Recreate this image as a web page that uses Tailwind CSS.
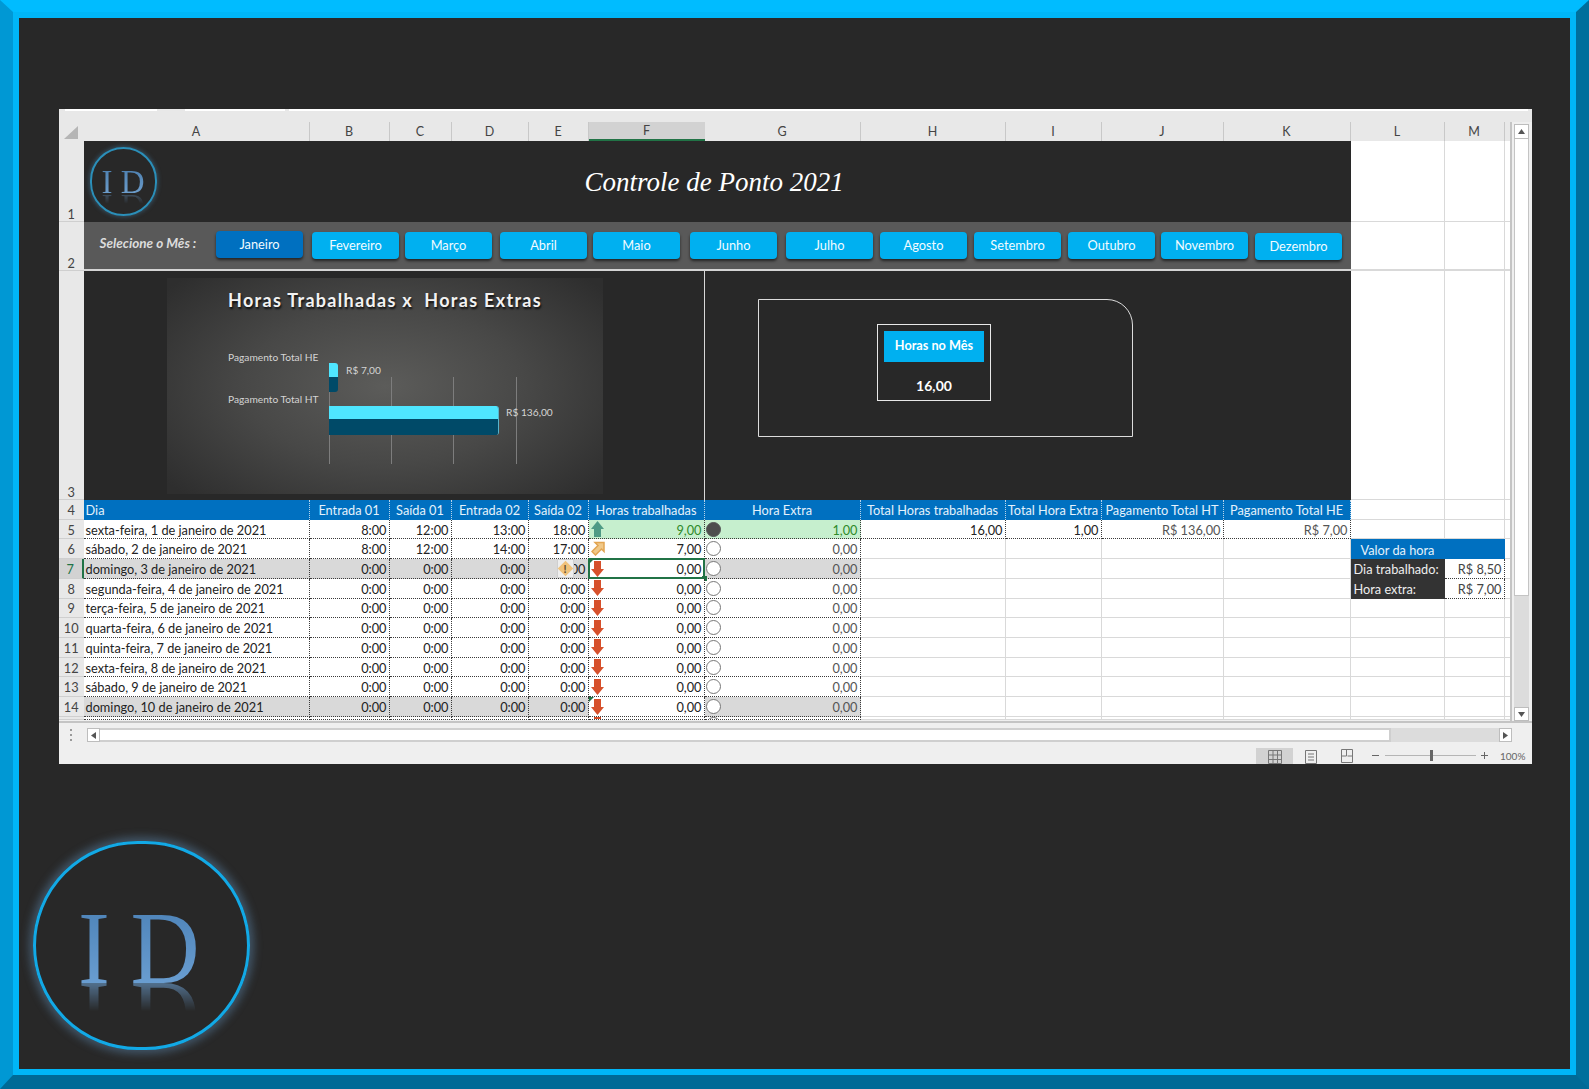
<!DOCTYPE html>
<html lang="pt-BR">
  <head>
    <meta charset="UTF-8" />
    <title>Controle de Ponto 2021</title>
    <script src="https://cdn.jsdelivr.net/npm/@tailwindcss/browser@4"></script>
  </head>
  <body class="bg-[#282828] font-[family-name:Lato,sans-serif]">
    <!-- moldura: as bordas de cores diferentes ja fazem o chanfro nos cantos -->
    <div class="w-[1589px] h-[1089px] overflow-hidden border-t-[12px] border-l-[13px] border-r-[13px] border-b-[14px] border-t-[#00bcff] border-l-[#0098d4] border-r-[#006f9c] border-b-[#006a96]">
      <div class="h-full border-x-[6px] border-t-[6px] border-b-[6px] border-[#00b6f7] bg-[#282828] pt-[91px]">

        <!-- planilha -->
        <div class="w-[1473px] h-[655px] ml-[40px] flex flex-col bg-[#efefef] overflow-hidden">
          <div class="h-[13px] shrink-0 bg-[#e8e8e8] flex gap-[4px] pl-[6px]">
            <div class="w-[92px] h-[2px] bg-white"></div>
            <div class="w-[100px] h-[2px] bg-white ml-[24px]"></div>
            <div class="flex-1 h-[2px] bg-white mr-[4px]"></div>
          </div>

          <div class="flex h-[599px] shrink-0">
            <div id="grid" class="w-[1453px] h-[599px] grid grid-cols-[24.500px_226px_80px_62px_77px_60px_116px_156px_145px_96px_122px_127px_94px_60px_7.500px] grid-rows-[19px_81px_49px_229px_repeat(11,19.72px)_3px] border-r-2 border-[#c4c4c4] text-[12.75px] text-[#222] overflow-hidden">
              <!-- linha das letras -->
              <div class="bg-[#e8e8e8] flex items-center justify-center">
                <svg width="16" height="15" viewBox="0 0 16 15"><path d="M15 2V15H1Z" fill="#b5b5b5" /></svg>
              </div>
              <div class="bg-[#e8e8e8] border-r border-[#c8c8c8] text-center text-[#444] text-[12.5px] leading-[19px]">A</div>
              <div class="bg-[#e8e8e8] border-r border-[#c8c8c8] text-center text-[#444] text-[12.5px] leading-[19px]">B</div>
              <div class="bg-[#e8e8e8] border-r border-[#c8c8c8] text-center text-[#444] text-[12.5px] leading-[19px]">C</div>
              <div class="bg-[#e8e8e8] border-r border-[#c8c8c8] text-center text-[#444] text-[12.5px] leading-[19px]">D</div>
              <div class="bg-[#e8e8e8] border-r border-[#c8c8c8] text-center text-[#444] text-[12.5px] leading-[19px]">E</div>
              <div class="bg-[#d2d2d2] border-b-2 border-[#217346] text-center text-[#444] text-[12.5px] leading-[18px]">F</div>
              <div class="bg-[#e8e8e8] border-r border-[#c8c8c8] text-center text-[#444] text-[12.5px] leading-[19px]">G</div>
              <div class="bg-[#e8e8e8] border-r border-[#c8c8c8] text-center text-[#444] text-[12.5px] leading-[19px]">H</div>
              <div class="bg-[#e8e8e8] border-r border-[#c8c8c8] text-center text-[#444] text-[12.5px] leading-[19px]">I</div>
              <div class="bg-[#e8e8e8] border-r border-[#c8c8c8] text-center text-[#444] text-[12.5px] leading-[19px]">J</div>
              <div class="bg-[#e8e8e8] border-r border-[#c8c8c8] text-center text-[#444] text-[12.5px] leading-[19px]">K</div>
              <div class="bg-[#e8e8e8] border-r border-[#c8c8c8] text-center text-[#444] text-[12.5px] leading-[19px]">L</div>
              <div class="bg-[#e8e8e8] border-r border-[#c8c8c8] text-center text-[#444] text-[12.5px] leading-[19px]">M</div>
              <div class="bg-[#e8e8e8]"></div>

              <!-- linha 1 -->
              <div class="bg-[#e8e8e8] border-b border-[#cfcfcf] flex items-end justify-center text-[#444] leading-[14px]">1</div>
              <div class="col-span-11 bg-[#282828] flex items-center">
                <div class="relative w-[67px] h-[69px] ml-[6px] shrink-0 rounded-full border-2 border-[#2b8fb9] shadow-[0_0_4px_1px_rgba(70,130,170,0.45)] pt-[17px] pl-[10px]">
                  <div class="whitespace-pre leading-none text-[33px] font-[family-name:'Liberation_Serif',serif] bg-linear-to-b from-[#4a7dad] to-[#74a4d2] bg-clip-text text-transparent">I D</div>
                  <div aria-hidden="true" class="absolute left-[10px] top-[40px] -scale-y-100 whitespace-pre leading-none text-[33px] font-[family-name:'Liberation_Serif',serif] text-[#6d9ccb] [mask-image:linear-gradient(to_bottom,transparent_55%,rgba(0,0,0,0.35)_84%)]">I D</div>
                </div>
                <div class="ml-[428px] text-[27px] italic text-white font-[family-name:'Liberation_Serif',serif] whitespace-nowrap mt-[2px]">Controle de Ponto 2021</div>
              </div>
              <div class="bg-white border-r border-b border-[#d9d9d9]"></div>
              <div class="bg-white border-r border-b border-[#d9d9d9]"></div>
              <div class="bg-white border-b border-[#d9d9d9]"></div>

              <!-- linha 2: botoes dos meses -->
              <div class="bg-[#e8e8e8] border-b border-[#cfcfcf] flex items-end justify-center text-[#444] leading-[14px]">2</div>
              <div class="col-span-11 bg-[#595959] border-b-2 border-[#d4d4d4] flex items-start text-[12.8px] text-[#f2fbff]">
                <div class="w-[132.500px] shrink-0 pl-[16px] pt-[11px] font-bold italic text-[13.5px] text-[#dcdcdc] whitespace-nowrap">Selecione o Mês :</div>
                <div class="w-[87px] h-[27px] mt-[9px] pt-[1px] shrink-0 rounded-[4px] bg-[#0070c0] shadow-[0_2px_3px_rgba(0,0,0,0.6)] flex items-center justify-center">Janeiro</div>
                <div class="w-[87px] h-[27px] mt-[10px] pt-[1px] ml-[9px] shrink-0 rounded-[4px] bg-[#00b0f0] shadow-[0_2px_3px_rgba(0,0,0,0.6)] flex items-center justify-center">Fevereiro</div>
                <div class="w-[87px] h-[27px] mt-[10px] pt-[1px] ml-[6px] shrink-0 rounded-[4px] bg-[#00b0f0] shadow-[0_2px_3px_rgba(0,0,0,0.6)] flex items-center justify-center">Março</div>
                <div class="w-[87px] h-[27px] mt-[10px] pt-[1px] ml-[8px] shrink-0 rounded-[4px] bg-[#00b0f0] shadow-[0_2px_3px_rgba(0,0,0,0.6)] flex items-center justify-center">Abril</div>
                <div class="w-[87px] h-[27px] mt-[10px] pt-[1px] ml-[6px] shrink-0 rounded-[4px] bg-[#00b0f0] shadow-[0_2px_3px_rgba(0,0,0,0.6)] flex items-center justify-center">Maio</div>
                <div class="w-[87px] h-[27px] mt-[10px] pt-[1px] ml-[10px] shrink-0 rounded-[4px] bg-[#00b0f0] shadow-[0_2px_3px_rgba(0,0,0,0.6)] flex items-center justify-center">Junho</div>
                <div class="w-[87px] h-[27px] mt-[10px] pt-[1px] ml-[9px] shrink-0 rounded-[4px] bg-[#00b0f0] shadow-[0_2px_3px_rgba(0,0,0,0.6)] flex items-center justify-center">Julho</div>
                <div class="w-[87px] h-[27px] mt-[10px] pt-[1px] ml-[7px] shrink-0 rounded-[4px] bg-[#00b0f0] shadow-[0_2px_3px_rgba(0,0,0,0.6)] flex items-center justify-center">Agosto</div>
                <div class="w-[87px] h-[27px] mt-[10px] pt-[1px] ml-[7px] shrink-0 rounded-[4px] bg-[#00b0f0] shadow-[0_2px_3px_rgba(0,0,0,0.6)] flex items-center justify-center">Setembro</div>
                <div class="w-[87px] h-[27px] mt-[10px] pt-[1px] ml-[7px] shrink-0 rounded-[4px] bg-[#00b0f0] shadow-[0_2px_3px_rgba(0,0,0,0.6)] flex items-center justify-center">Outubro</div>
                <div class="w-[87px] h-[27px] mt-[10px] pt-[1px] ml-[6px] shrink-0 rounded-[4px] bg-[#00b0f0] shadow-[0_2px_3px_rgba(0,0,0,0.6)] flex items-center justify-center">Novembro</div>
                <div class="w-[87px] h-[27px] mt-[11px] pt-[1px] ml-[7px] shrink-0 rounded-[4px] bg-[#00b0f0] shadow-[0_2px_3px_rgba(0,0,0,0.6)] flex items-center justify-center">Dezembro</div>
              </div>
              <div class="bg-white border-r border-b-2 border-[#d9d9d9]"></div>
              <div class="bg-white border-r border-b-2 border-[#d9d9d9]"></div>
              <div class="bg-white border-b-2 border-[#d9d9d9]"></div>

              <!-- linha 3: grafico e caixa de horas -->
              <div class="bg-[#e8e8e8] border-b border-[#cfcfcf] flex items-end justify-center text-[#444] leading-[14px]">3</div>
              <div class="col-span-11 bg-[#282828] flex">
                <div class="w-[621.500px] h-[229px] shrink-0 border-r border-[#d8d8d8] pl-[83.500px] pt-[7px]">
                  <div class="relative w-[436px] h-[216px] bg-[radial-gradient(ellipse_64%_72%_at_center,#5c5c5a_0%,#484847_50%,#2e2e2e_100%)] text-[10.2px] text-[#d4d4d4]">
                    <div class="pt-[9px] text-center text-[18px] leading-[26px] font-bold tracking-[1.3px] text-[#f2f2f2] [text-shadow:1px_2px_2px_rgba(0,0,0,0.8)] whitespace-nowrap">Horas Trabalhadas x&nbsp; Horas Extras</div>
                    <div class="absolute left-[162px] top-[99px] h-[87px] w-px bg-[#7d7d7d]"></div>
                    <div class="absolute left-[224px] top-[99px] h-[87px] w-px bg-[#7d7d7d]"></div>
                    <div class="absolute left-[286px] top-[99px] h-[87px] w-px bg-[#7d7d7d]"></div>
                    <div class="absolute left-[349px] top-[99px] h-[87px] w-px bg-[#7d7d7d]"></div>
                    <div class="absolute left-[61px] top-[72px] leading-[14px] whitespace-nowrap">Pagamento Total HE</div>
                    <div class="absolute left-[61px] top-[114px] leading-[14px] whitespace-nowrap">Pagamento Total HT</div>
                    <div class="absolute left-[162px] top-[85px] w-[9px] h-[29px] rounded-r-[3px] overflow-hidden flex flex-col">
                      <div class="h-[14px] bg-[#4fe6ff]"></div>
                      <div class="flex-1 bg-[#004a68]"></div>
                    </div>
                    <div class="absolute left-[162px] top-[128px] w-[170px] h-[29px] rounded-r-[3px] overflow-hidden flex flex-col border-r border-[#58b4cc]">
                      <div class="h-[13px] bg-[#4fe6ff]"></div>
                      <div class="flex-1 bg-[#004a68]"></div>
                    </div>
                    <div class="absolute left-[179px] top-[85px] leading-[14px] whitespace-nowrap">R$ 7,00</div>
                    <div class="absolute left-[339px] top-[127px] leading-[14px] whitespace-nowrap">R$ 136,00</div>
                  </div>
                </div>
                <div class="pl-[53px] pt-[28px]">
                  <div class="w-[375px] h-[138px] border border-[#dcdcdc] rounded-tr-[26px] pl-[118px] pt-[24px]">
                    <div class="w-[114px] h-[77px] border border-[#e8e8e8] px-[6px] pt-[6px] text-center font-bold text-white">
                      <div class="h-[31px] bg-[#00b0f0] flex items-center justify-center text-[12.7px] pb-[2px]">Horas no Mês</div>
                      <div class="mt-[15px] text-[14px] leading-[18px]">16,00</div>
                    </div>
                  </div>
                </div>
              </div>
              <div class="bg-white border-r border-b border-[#d9d9d9]"></div>
              <div class="bg-white border-r border-b border-[#d9d9d9]"></div>
              <div class="bg-white border-b border-[#d9d9d9]"></div>

              <!-- linha 4: cabecalho da tabela -->
              <div class="bg-[#e8e8e8] border-b border-[#cfcfcf] flex items-center justify-center text-[#444] pt-[2px]">4</div>
              <div class="bg-[#0070c0] border-r border-dotted border-[#b8d4ea] text-[#e4f2fc] flex items-center px-[2px] pt-[2px] whitespace-nowrap">Dia</div>
              <div class="bg-[#0070c0] border-r border-dotted border-[#b8d4ea] text-[#e4f2fc] flex items-center justify-center pt-[2px] whitespace-nowrap">Entrada 01</div>
              <div class="bg-[#0070c0] border-r border-dotted border-[#b8d4ea] text-[#e4f2fc] flex items-center justify-center pt-[2px] whitespace-nowrap">Saída 01</div>
              <div class="bg-[#0070c0] border-r border-dotted border-[#b8d4ea] text-[#e4f2fc] flex items-center justify-center pt-[2px] whitespace-nowrap">Entrada 02</div>
              <div class="bg-[#0070c0] border-r border-dotted border-[#b8d4ea] text-[#e4f2fc] flex items-center justify-center pt-[2px] whitespace-nowrap">Saída 02</div>
              <div class="bg-[#0070c0] border-r border-dotted border-[#b8d4ea] text-[#e4f2fc] flex items-center justify-center pt-[2px] whitespace-nowrap">Horas trabalhadas</div>
              <div class="bg-[#0070c0] border-r border-dotted border-[#b8d4ea] text-[#e4f2fc] flex items-center justify-center pt-[2px] whitespace-nowrap">Hora Extra</div>
              <div class="bg-[#0070c0] border-r border-dotted border-[#b8d4ea] text-[#e4f2fc] flex items-center justify-center pt-[2px] whitespace-nowrap overflow-hidden">Total Horas trabalhadas</div>
              <div class="bg-[#0070c0] border-r border-dotted border-[#b8d4ea] text-[#e4f2fc] flex items-center justify-center pt-[2px] whitespace-nowrap overflow-hidden">Total Hora Extra</div>
              <div class="bg-[#0070c0] border-r border-dotted border-[#b8d4ea] text-[#e4f2fc] flex items-center justify-center pt-[2px] whitespace-nowrap overflow-hidden">Pagamento Total HT</div>
              <div class="bg-[#0070c0] border-r border-dotted border-[#b8d4ea] text-[#e4f2fc] flex items-center justify-center pt-[2px] whitespace-nowrap overflow-hidden">Pagamento Total HE</div>
              <div class="bg-white border-r border-b border-[#d9d9d9]"></div>
              <div class="bg-white border-r border-b border-[#d9d9d9]"></div>
              <div class="bg-white border-b border-[#d9d9d9]"></div>
            </div>

            <!-- barra de rolagem vertical -->
            <div class="w-[18px] pl-[2px] flex flex-col">
              <div class="w-[15px] h-[15px] mt-[2px] bg-white border border-[#bdbdbd] flex items-center justify-center">
                <svg width="7" height="5" viewBox="0 0 7 5"><path d="M3.5 0 7 5H0Z" fill="#555" /></svg>
              </div>
              <div class="w-[15px] h-[458px] bg-white border-x border-b border-[#c4c4c4]"></div>
              <div class="w-[15px] h-[111px] bg-[#dcdcdc]"></div>
              <div class="w-[15px] h-[14px] bg-white border border-[#bdbdbd] flex items-center justify-center">
                <svg width="7" height="5" viewBox="0 0 7 5"><path d="M3.5 5 7 0H0Z" fill="#555" /></svg>
              </div>
            </div>
          </div>

          <!-- barra de rolagem horizontal -->
          <div class="h-[27px] shrink-0 border-t-2 border-[#c4c4c4] flex items-start pl-[28px] pt-[5px] relative">
            <div class="absolute left-[11px] top-[6px] flex flex-col gap-[3px]">
              <div class="w-[2px] h-[2px] bg-[#9a9a9a]"></div>
              <div class="w-[2px] h-[2px] bg-[#9a9a9a]"></div>
              <div class="w-[2px] h-[2px] bg-[#9a9a9a]"></div>
            </div>
            <div class="w-[13px] h-[14px] bg-white border border-[#bdbdbd] flex items-center justify-center shrink-0">
              <svg width="5" height="7" viewBox="0 0 5 7"><path d="M0 3.5 5 0V7Z" fill="#555" /></svg>
            </div>
            <div class="w-[1291px] h-[14px] bg-white border-y-2 border-r-2 border-[#cfcfcf] shrink-0"></div>
            <div class="w-[108px] h-[14px] bg-[#dcdcdc] shrink-0"></div>
            <div class="w-[13px] h-[14px] bg-white border border-[#bdbdbd] flex items-center justify-center shrink-0">
              <svg width="5" height="7" viewBox="0 0 5 7"><path d="M5 3.5 0 0V7Z" fill="#555" /></svg>
            </div>
          </div>

          <!-- barra de status -->
          <div class="h-[16px] shrink-0 flex items-start text-[#666] overflow-hidden">
            <div class="ml-[1197px] w-[37px] h-[16px] bg-[#d2d2d2] flex justify-center pt-[2px]">
              <svg width="14" height="14" viewBox="0 0 14 14" fill="none" stroke="#777"><path d="M.5.5h13v13H.5zM.5 5h13M.5 9.500h13M5 .5v13M9.500.5v13" /></svg>
            </div>
            <svg class="ml-[12px] mt-[2px]" width="12" height="14" viewBox="0 0 12 14" fill="none" stroke="#777"><path d="M.5.5h11v13H.5zM3 4h6M3 7h6M3 10h6" /></svg>
            <svg class="ml-[24px] mt-[1px]" width="12" height="14" viewBox="0 0 12 14" fill="none" stroke="#777"><path d="M.5.5h11v13H.5zM.5 7h5V.5M6.500 7h5" /></svg>
            <div class="ml-[19px] w-[7px] h-px mt-[7px] bg-[#666]"></div>
            <div class="relative ml-[6px] w-[91px] h-px mt-[7px] bg-[#b5b5b5]">
              <div class="absolute left-[45px] -top-[5px] w-[3px] h-[11px] bg-[#666]"></div>
            </div>
            <div class="relative ml-[5px] w-[7px] h-px mt-[7px] bg-[#666]">
              <div class="absolute left-[3px] -top-[3px] w-px h-[7px] bg-[#666]"></div>
            </div>
            <div class="ml-[12px] text-[10px] leading-[16px] whitespace-nowrap">100%</div>
          </div>
        </div>

        <!-- logo grande -->
        <div class="relative w-[217px] h-[209px] mt-[77px] ml-[14px] rounded-full border-[3px] border-[#12a9e6] shadow-[0_0_8px_4px_rgba(95,140,180,0.45)] pt-[53px] pl-[42px]">
          <div class="origin-left scale-x-[0.93] whitespace-pre leading-none text-[103px] tracking-[-1.8px] font-[family-name:'Liberation_Serif',serif] bg-linear-to-b from-[#4a80b5] to-[#6fa3d6] bg-clip-text text-transparent">I D</div>
          <div aria-hidden="true" class="absolute left-[42px] top-[122px] origin-left scale-x-[0.93] -scale-y-100 whitespace-pre leading-none text-[103px] tracking-[-1.8px] font-[family-name:'Liberation_Serif',serif] text-[#6fa3d6] [mask-image:linear-gradient(to_bottom,transparent_56%,rgba(0,0,0,0.6)_84%)]">I D</div>
        </div>
      </div>
    </div>

    <script>
      const rows = [
        ["sexta-feira, 1 de janeiro de 2021", "8:00", "12:00", "13:00", "18:00", "9,00", "1,00"],
        ["sábado, 2 de janeiro de 2021", "8:00", "12:00", "14:00", "17:00", "7,00", "0,00"],
        ["domingo, 3 de janeiro de 2021", "0:00", "0:00", "0:00", "0:00", "0,00", "0,00"],
        ["segunda-feira, 4 de janeiro de 2021", "0:00", "0:00", "0:00", "0:00", "0,00", "0,00"],
        ["terça-feira, 5 de janeiro de 2021", "0:00", "0:00", "0:00", "0:00", "0,00", "0,00"],
        ["quarta-feira, 6 de janeiro de 2021", "0:00", "0:00", "0:00", "0:00", "0,00", "0,00"],
        ["quinta-feira, 7 de janeiro de 2021", "0:00", "0:00", "0:00", "0:00", "0,00", "0,00"],
        ["sexta-feira, 8 de janeiro de 2021", "0:00", "0:00", "0:00", "0:00", "0,00", "0,00"],
        ["sábado, 9 de janeiro de 2021", "0:00", "0:00", "0:00", "0:00", "0,00", "0,00"],
        ["domingo, 10 de janeiro de 2021", "0:00", "0:00", "0:00", "0:00", "0,00", "0,00"],
        ["", "", "", "", "", "", ""],
      ];

      const arrowUp = `<svg class="shrink-0" width="13" height="16" viewBox="0 0 13 16"><path d="M6.500 0 13 8H10V16H3V8H0Z" fill="#4e9a85" /></svg>`;
      const arrowSide = `<svg class="shrink-0" width="14" height="15" viewBox="0 0 14 15"><path d="M4 1.500H13V10.500L10.500 8 4.500 14 1 10.500 7 4.500Z" fill="#f0c888" stroke="#e2a552" stroke-width="1.500" /></svg>`;
      const arrowDown = `<svg class="shrink-0" width="13" height="16" viewBox="0 0 13 16"><path d="M3 0H10V8H13L6.500 16 0 8H3Z" fill="#d6502b" /></svg>`;
      const arrows = [arrowUp, arrowSide];

      const dotted = "border-r border-b border-dotted border-[#3a3a3a]";
      const plain = "bg-white border-r border-b border-[#d9d9d9]";

      let html = "";
      rows.forEach((r, i) => {
        const number = i + 5;
        const sunday = i === 2 || i === 9;
        const blank = r[0] === "";
        const fill = sunday ? "bg-[#d9d9d9]" : "bg-white";
        const green = i === 0;
        const align = blank ? "items-start overflow-hidden" : "items-center";
        const drop = blank ? "" : "pt-[2px]";
        const text = (value) => `<span class="${drop}">${value}</span>`;

        html += number === 7
          ? `<div class="bg-[#d2d2d2] border-r-2 border-b border-r-[#217346] border-b-[#cfcfcf] flex items-center justify-center pt-[2px] text-[#217346]">${number}</div>`
          : `<div class="bg-[#e8e8e8] border-b border-[#cfcfcf] flex ${align} justify-center text-[#444]">${text(blank ? "" : number)}</div>`;

        html += `<div class="${fill} ${dotted} flex ${align} px-[2px] whitespace-nowrap">${text(r[0])}</div>`;
        for (let c = 1; c <= 4; c++) {
          const warning = i === 2 && c === 4
            ? `<div class="absolute left-[28px] top-0 w-[17px] h-[19px] bg-[#eeeeee] border border-[#cfcfcf] flex items-center justify-center"><div class="w-[11px] h-[11px] rotate-45 bg-[#f0c27b]"></div><div class="absolute inset-0 text-center text-[11px] leading-[17px] font-bold text-[#5a4a2a]">!</div></div>`
            : "";
          html += `<div class="relative ${fill} ${dotted} flex ${align} justify-end px-[2px]">${text(r[c])}${warning}</div>`;
        }

        const corner = i === 2 || i === 9
          ? `<div class="absolute left-0 top-0 w-0 h-0 border-t-[5px] border-r-[5px] border-t-[#217346] border-r-transparent"></div>`
          : "";
        const selected = i === 2
          ? `<div class="absolute -left-[1px] -top-[1px] -right-[1px] -bottom-[1px] border-2 border-[#217346]"></div><div class="absolute -right-[3px] -bottom-[3px] w-[5px] h-[5px] bg-[#217346]"></div>`
          : "";
        const icon = arrows[i] || arrowDown;
        html += `<div class="relative ${green ? "bg-[#c6efce] text-[#2f8a2a]" : "bg-white"} ${dotted} flex ${align} justify-between px-[2px]">${icon}${text(r[5])}${corner}${selected}</div>`;

        const circle = `<div class="shrink-0 w-[15px] h-[15px] rounded-full border-[1.5px] ${green ? "bg-[#4d4d4d] border-[#555]" : "bg-white border-[#777]"}"></div>`;
        html += `<div class="${green ? "bg-[#c6efce] text-[#2f8a2a]" : fill + " text-[#555]"} ${dotted} flex ${align} justify-between pl-[1px] pr-[2px]">${circle}${text(r[6])}</div>`;

        if (i === 0) {
          html += `<div class="bg-white ${dotted} flex ${align} justify-end px-[2px]">${text("16,00")}</div>`;
          html += `<div class="bg-white ${dotted} flex ${align} justify-end px-[2px]">${text("1,00")}</div>`;
          html += `<div class="bg-white ${dotted} flex ${align} justify-end px-[2px] text-[#555]">${text("R$ 136,00")}</div>`;
          html += `<div class="bg-white ${dotted} flex ${align} justify-end px-[2px] text-[#555]">${text("R$ 7,00")}</div>`;
        } else {
          html += `<div class="${plain}"></div>`.repeat(4);
        }

        if (i === 1) {
          html += `<div class="col-span-2 bg-[#0070c0] text-[#e4f2fc] flex items-center pt-[2px] pl-[10px]">Valor da hora</div>`;
        } else if (i === 2 || i === 3) {
          html += `<div class="bg-[#333333] text-[#eeeeee] flex items-center pt-[2px] pl-[3px] whitespace-nowrap">${i === 2 ? "Dia trabalhado:" : "Hora extra:"}</div>`;
          html += `<div class="bg-white ${dotted} flex items-center pt-[2px] justify-end px-[2px] text-[#444]">${i === 2 ? "R$ 8,50" : "R$ 7,00"}</div>`;
        } else {
          html += `<div class="${plain}"></div><div class="${plain}"></div>`;
        }
        html += `<div class="bg-white border-b border-[#d9d9d9]"></div>`;
      });
      document.getElementById("grid").insertAdjacentHTML("beforeend", html);
    </script>
  </body>
</html>
